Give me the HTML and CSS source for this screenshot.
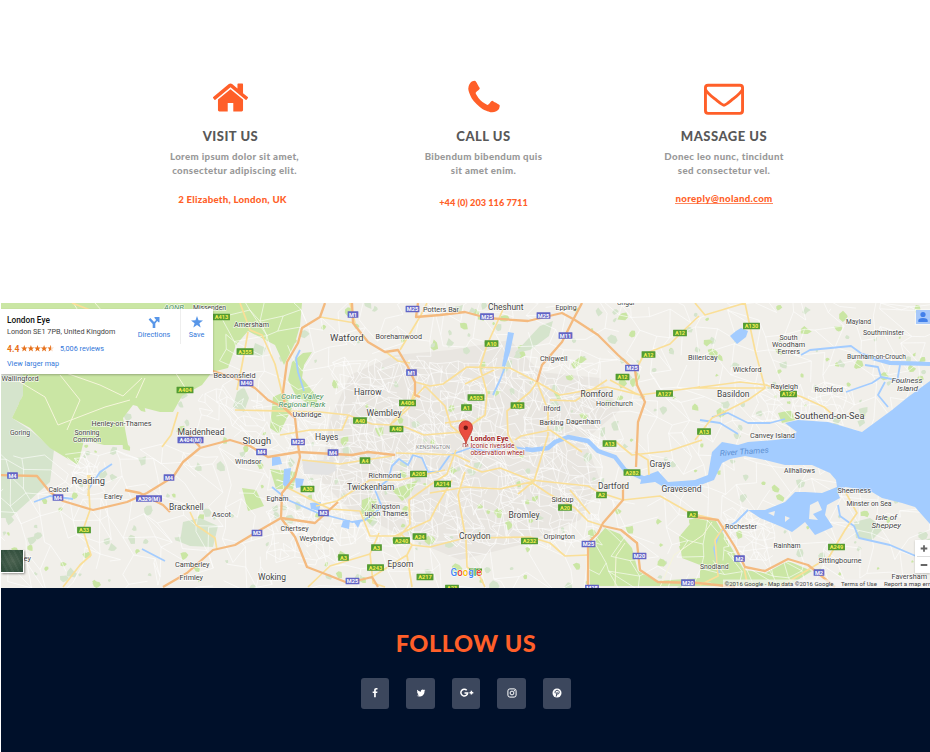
FILE: index.html
```html
<!DOCTYPE html>
<html lang="en">
<head>
<meta charset="utf-8">
<title>Contact</title>
<link rel="stylesheet" href="styles.css">
</head>
<body>
<section class="contact">
  <article class="contact-item visit">
    <svg class="icon" viewBox="0 0 1792 1792"><path d="M1472 992v480q0 26-19 45t-45 19h-384v-384h-256v384h-384q-26 0-45-19t-19-45v-480q0-1 .5-3t.5-3l575-474 575 474q1 2 1 6zm223-69l-62 74q-8 9-21 11h-3q-13 0-21-7l-692-577-692 577q-12 8-24 7-13-2-21-11l-62-74q-8-10-7-23.5t11-21.5l719-599q32-26 76-26t76 26l244 204v-195q0-14 9-23t23-9h192q14 0 23 9t9 23v408l219 182q10 8 11 21.5t-7 23.5z"/></svg>
    <h3>VISIT US</h3>
    <p>Lorem ipsum dolor sit amet,<br>consectetur adipiscing elit.</p>
    <span class="detail">2 Elizabeth, London, UK</span>
  </article>
  <article class="contact-item call">
    <svg class="icon" viewBox="0 0 1792 1792"><path d="M1600 1240q0 27-10 70.5t-21 68.5q-21 50-122 106-94 51-186 51-27 0-53-3.5t-57.5-12.5-47-14.5-55.5-20.5-49-18q-98-35-175-83-127-79-264-216t-216-264q-48-77-83-175-3-9-18-49t-20.5-55.5-14.5-47-12.5-57.5-3.5-53q0-92 51-186 56-101 106-122 25-11 68.5-21t70.5-10q14 0 21 3 18 6 53 76 11 19 30 54t35 63.5 31 53.5q3 4 17.5 25t21.5 35.5 7 28.5q0 20-28.5 50t-62 55-62 53-28.5 46q0 9 5 22.5t8.5 20.5 14 24 11.5 19q76 137 174 235t235 174q2 1 19 11.5t24 14 20.5 8.5 22.5 5q18 0 46-28.5t53-62 55-62 50-28.5q14 0 28.5 7t35.5 21.5 25 17.5q25 15 53.5 31t63.5 35 54 30q70 35 76 53 3 7 3 21z"/></svg>
    <h3>CALL US</h3>
    <p>Bibendum bibendum quis<br>sit amet enim.</p>
    <span class="detail">+44 (0) 203 116 7711</span>
  </article>
  <article class="contact-item message">
    <svg class="icon" viewBox="0 0 40 40"><g fill="none" stroke="#ff5f29" stroke-width="2.9"><rect x="1.45" y="7.2" width="37.1" height="28.2" rx="2.6"/><path d="M1.5 11.5C3 15 5 16.3 13 22.7C17 26 18.5 27.2 20 27.2S23 26 27 22.7C35 16.3 37 15 38.5 11.5"/></g></svg>
    <h3>MASSAGE US</h3>
    <p>Donec leo nunc, tincidunt<br>sed consectetur vel.</p>
    <a class="detail">noreply@noland.com</a>
  </article>
</section>

<section class="map">
  <svg class="map-canvas" viewBox="1 303 929 285" preserveAspectRatio="none">
    <rect class="land" x="0" y="300" width="930" height="290"/>
    <path class="urban" d="M350 375L395 355L450 350L510 340L540 372L600 378L620 410L585 440L600 480L580 520L520 545L460 560L400 535L350 510L320 480L330 420Z"/>
    <g id="patches"></g>
    <g class="wood">
      <path d="M0 375L23 374V395L12 418L30 430L54 450L50 482L10 518H0Z"/>
      <path d="M183 522L200 518L218 526L213 547L190 546L180 542Z"/>
      <path d="M540 326L553 321L549 336L530 350L515 353L527 340Z"/>
      <path d="M854 522L870 518L884 528L872 540L856 538Z"/>
    </g>
    <g class="park">
      <path d="M0 303H302L300 326L295 343L284 365L275 345L248 331L236 345L228 368L212 372L202 385L182 396L173 412L160 412L133 405L123 418L128 445L104 445L84 440L78 465L50 448L30 428L12 418L23 395V372L0 350Z"/>
      <path d="M303 353L312 352L304 365L302 378L318 398L315 408L296 396L288 380L292 362Z"/>
      <path d="M273 397L284 392L292 408L279 434L270 428Z"/>
      <path d="M605 528L620 534L632 548L638 571L656 581L700 578V565L682 558L679 537L695 518L716 521L731 547L744 570L766 573L788 561L812 571L788 586H590L589 547Z"/>
      <path d="M392 490L418 480L409 496L402 501Z"/><path d="M242 488L256 490L264 506L248 511Z"/>
      <path d="M571 364L581 356L587 359L574 369Z"/><path d="M778 413L791 410L795 420L782 423Z"/>
      <path d="M270 469L297 472L293 489L276 489Z"/><path d="M362 500L370 497L381 508L370 524L361 515Z"/>
    </g>
    <path class="land" d="M204 386L215 372L229 369L237 346L248 333L274 347L282 365L281 390L268 399L262 432L225 437L190 425L181 400Z"/>
    <g class="wood"><path d="M237 392L244 387L249 398L244 412L233 407Z"/><path d="M255 343L266 348L262 357L252 354Z"/></g>
    <g id="streets" class="streets"></g>
    <path class="airport" d="M302 460H333L337 470L328 475L304 474Z"/>
    <g class="water">
      <path d="M930 381L908 397L892 410L862 432L852 429L828 422L798 420L785 423L797 432L788 438L775 440L748 442L738 445L722 442L712 452L708 475L695 480L668 482L658 471L642 477L640 484L655 482L667 489L695 487L714 480L722 463L730 459L745 456L765 460L785 465L812 465L830 473L836 480L837 487L822 493L805 492L795 492L785 502L765 510L748 510L760 518L782 527L792 532L800 526L805 522L815 535L833 527L825 515L827 505L840 498L838 493L845 487L852 488L872 492L882 498L902 503L915 507L930 524Z"/>
      <path d="M730 336L736 331L741 328L748 331L746 337L737 344Z"/>
      <path d="M272 456L280 457L282 464L272 466ZM284 469L291 468L289 488L283 485ZM295 478L304 479L302 487L296 488ZM310 503L321 502L319 511L311 509ZM343 521L350 520L349 529L341 527ZM354 522L361 521L358 528Z"/>
      <path d="M508 332L514 333L510 352L505 367L502 366Z"/>
    </g>
    <path class="island" d="M810 505L818 501L822 510L813 514L818 520L809 519ZM768 513L775 511L774 516ZM785 516L790 518L785 522Z"/>
    <path class="river wide" d="M645 479L625 470L615 457L598 451L588 441L568 437L555 442L548 448L532 450L525 449"/>
    <path class="river" d="M525 449L508 446L488 452L470 448L450 455L438 472L428 472L422 458L413 455L408 465L399 459L392 466L388 480L375 490L382 507L365 520L352 522L318 513L288 500L272 487"/>
    <path class="river" d="M930 363L890 362L862 354L851 346L810 350L801 355M900 365L897 382M846 392L872 383L881 377L902 381M881 377L878 367L865 365M885 382L878 395L888 407M505 367L500 380L493 395M509 345L505 363"/>
    <path class="river bay" d="M862 355L890 363L930 364"/>
    <path class="river" d="M838 505L840 516L854 526L859 538L890 545L918 557M748 510L736 522L720 532L714 548L719 573M712 417L728 413L748 423L770 423L785 419M700 420L720 423L738 434M300 350L296 358L298 372L304 391M88 490L100 472L112 464M34 502L50 496L73 499M142 549L165 561"/>
    <path class="minor thin" d="M0 350L38 361L66 373L100 385L123 396L142 378M0 355L20 382L45 397L58 425L105 407L130 400M74 304L90 330L120 350L150 342L185 322L212 330M60 375L80 400L67 430M145 378L136 398M175 372L190 395M95 303L117 328L142 332L165 313M660 587L674 555L703 535L712 522M615 587L616 556L625 543"/>
    <path class="minor" d="M72 303L98 313M178 412L171 435L162 447M240 303L250 330L262 335L275 364L283 397L288 407M320 317L355 323L350 303M235 410L320 412L348 415L372 424L390 425L405 427L424 435L448 433L465 432M248 332L242 365L237 390M470 462L455 455L428 454L396 453M400 350L421 315L427 303M386 352L398 361L410 363M415 382L430 386L443 384L467 367L510 368L537 382L560 395L607 387L640 395L700 387M425 386L445 406L451 426L466 438M415 390L409 408L393 423M425 386L390 425M505 305L487 345L480 367L487 393L485 415L468 427M537 382L530 392L507 411L508 435L517 450M537 382L548 410L548 435L541 458L534 481L518 494M465 465L482 472L500 468L531 480L588 486L598 492L623 500L660 496L690 513L718 520M430 493L466 487L500 489L531 482L549 494L575 508L588 521L604 526M636 370L644 354L670 344L682 332L699 316M610 380L635 393L645 397M465 384L494 370M550 400L575 401L607 380M582 452L550 430L521 436L515 440M616 442L632 455L669 451L702 440M695 440L712 418L748 400L765 388L695 388M765 388L755 350L745 303L705 315L695 303M695 388L740 382L766 385L802 397L824 407L832 414M302 460L340 464L365 460L392 456M288 488L330 509L360 511L370 536L400 536L410 524L409 500L430 485L447 474L456 450M316 506L337 501L370 480L400 480L445 470M308 587L330 566L370 554L379 533M370 553L373 583L385 587M395 536L430 520L437 506L452 480M372 577L407 555L412 545L430 547L465 538L530 537L550 543L565 556L588 555M407 555L410 574L412 587M412 545L402 535M465 472L458 495L466 540L467 567L480 577L485 587M90 510L83 530L91 555L80 565L63 587M190 512L196 525L215 538L217 550M88 475L90 510M829 557L845 530L857 513L846 493M829 557L780 587M700 585L718 576L715 540L725 525M744 568L748 587M570 490L590 514M635 452L648 460L649 475M465 420L445 423M90 475L88 496M280 435L310 430L342 430L348 416"/>
    <g id="motorways"></g>
    <g id="shields"></g>
    <g id="labels"></g>
    <text class="river-name" transform="translate(720 456) rotate(-4)" textLength="49" lengthAdjust="spacingAndGlyphs">River Thames</text>
    <path class="pin" d="M466 444C465 438 459 433 459 427.500A6.700 6.700 0 0 1 472.500 427.500C472.500 433 467 438 466 444Z"/><circle cx="465.700" cy="427.800" r="2.200" fill="#651713"/>
    <path class="ferris" d="M463 447V443.500H465.500V447M466 447L467.500 444L468 447"/>
    <g class="credits"><rect x="723" y="579.500" width="207" height="8.500"/><text x="724.500" y="585.500" textLength="109" lengthAdjust="spacingAndGlyphs">©2016 Google - Map data ©2016 Google</text><text x="841" y="585.500" textLength="36" lengthAdjust="spacingAndGlyphs">Terms of Use</text><text x="884" y="585.500" textLength="46" lengthAdjust="spacingAndGlyphs">Report a map err</text></g>
    <rect x="469" y="568.500" width="13" height="6.500" class="shield-a"/>
    <text class="google" x="450.500" y="576" textLength="31" lengthAdjust="spacingAndGlyphs"><tspan fill="#4285f4">G</tspan><tspan fill="#ea4335">o</tspan><tspan fill="#fbbc05">o</tspan><tspan fill="#4285f4">g</tspan><tspan fill="#34a853">l</tspan><tspan fill="#ea4335">e</tspan></text>
  </svg>
  <aside class="place-card">
    <div class="place-info">
      <strong>London Eye</strong>
      <span class="address">London SE1 7PB, United Kingdom</span>
      <span class="rating"><b>4.4</b><svg class="stars" viewBox="0 0 33 7"><defs><path id="star" d="M3.300 0L4.200 2.400L6.600 2.500L4.700 4.100L5.400 6.500L3.300 5.100L1.200 6.500L1.900 4.100L0 2.500L2.400 2.400Z"/><clipPath id="half"><path d="M0 0H3.500V7H0Z"/></clipPath></defs><use href="#star"/><use href="#star" x="6.600"/><use href="#star" x="13.200"/><use href="#star" x="19.800"/><use href="#star" x="26.400" opacity=".3"/><g transform="translate(26.400)"><use href="#star" clip-path="url(#half)"/></g></svg><a>5,006 reviews</a></span>
      <a class="larger">View larger map</a>
    </div>
    <div class="place-action directions"><svg viewBox="0 0 12 12"><path d="M4.700 12V8L.6 3.500L2.300 2L6.100 6L7.900 4.300V3.500L6.500 2V1H11.500V6.200H10.500L9.200 5L7.300 7.500V12Z"/></svg><a>Directions</a></div>
    <div class="place-action save"><svg viewBox="0 0 12 12"><path d="M6 0L7.500 4.300L12 4.500L8.400 7.200L9.700 11.600L6 9L2.300 11.600L3.600 7.200L0 4.500L4.500 4.300Z"/></svg><a>Save</a></div>
  </aside>
  <div class="account"><svg viewBox="0 0 14 14"><circle cx="7" cy="4.500" r="2.600"/><path d="M2.300 12V10.500Q2.300 8 7 8T11.700 10.500V12Z"/></svg></div>
  <div class="zoom"><svg viewBox="0 0 15 33"><path d="M5.700 8.500H12.300M9 5.200V11.800M5.700 25H12.300" stroke="#666" stroke-width="1.800"/><path d="M2 16.500H15" stroke="#ddd"/></svg></div>
  <div class="satellite"></div>
</section>

<footer class="follow">
  <h2>FOLLOW US</h2>
  <nav class="social">
    <a><svg viewBox="0 0 1792 1792"><path d="M1343 12v264h-157q-86 0-116 36t-30 108v189h293l-39 296h-254v759h-306v-759h-255v-296h255v-218q0-186 104-288.500t277-102.500q147 0 228 12z"/></svg></a>
    <a><svg viewBox="0 0 1792 1792"><path d="M1684 408q-67 98-162 167 1 14 1 42 0 130-38 259.500t-115.500 248.500-184.500 210.500-258 146-323 54.500q-271 0-496-145 35 4 78 4 225 0 401-138-105-2-188-64.500t-114-159.500q33 5 61 5 43 0 85-11-112-23-185.500-111.500t-73.500-205.500v-4q68 38 146 41-66-44-105-115t-39-154q0-88 44-163 121 149 294.500 238.500t371.500 99.500q-8-38-8-74 0-134 94.500-228.500t228.500-94.500q140 0 236 102 109-21 205-78-37 115-142 178 93-10 186-50z"/></svg></a>
    <a><svg class="gplus" viewBox="0 0 14 10"><path d="M6.700 2.200A3.400 3.400 0 1 0 7.700 4.900H4.500M9.500 4.700H13.300M11.400 2.800V6.600" fill="none" stroke="#fff" stroke-width="1.500"/></svg></a>
    <a><svg viewBox="0 0 10 10"><g fill="none" stroke="#fff"><rect x=".9" y=".9" width="8.200" height="8.200" rx="2"/><circle cx="5" cy="5" r="1.900"/></g><circle cx="7.400" cy="2.700" r=".6"/></svg></a>
    <a><svg viewBox="0 0 10 10"><circle cx="5" cy="5" r="4.500"/><path d="M3.300 5.300C2.500 3.700 3.600 2.300 5.200 2.300C7.800 2.300 7.700 6.100 5.700 6.100C5.200 6.100 4.800 5.800 4.800 5.500M5.200 3.900L4.200 8.500" fill="none" stroke="#3c475d" stroke-width="1"/></svg></a>
  </nav>
</footer>
<script src="map.js"></script>
</body>
</html>
```

FILE: styles.css
```css
* { box-sizing: border-box; }
body { margin: 0; width: 930px; height: 752px; overflow: hidden; background: #fff; font-family: Lato, "Open Sans", sans-serif; display: flex; flex-direction: column; }
.contact { height: 303px; flex: none; padding: 78px 84px 0 111px; display: grid; grid-template-columns: 247px 251px 230px; }
.contact-item { display: flex; flex-direction: column; align-items: center; text-align: center; white-space: nowrap; }
.visit { padding-right: 4px; }
.icon { width: 40px; height: 40px; fill: #ff5f29; flex: none; }
.visit .icon { width: 39px; height: 39px; margin: 0 4px 1px 0; }
h3 { margin: 9px 0 0; color: #585858; font-size: 13px; font-weight: 900; line-height: 18px; letter-spacing: .5px; }
.visit h3 { margin-right: 4px; }
p { margin: 4px 0 0; color: #999; font-size: 9.700px; font-weight: 900; line-height: 14.400px; letter-spacing: .34px; }
.visit p { margin-left: 4px; }
.detail { margin-top: 15px; color: #ff5f29; font-size: 9.700px; font-weight: 900; line-height: 12px; letter-spacing: .23px; }
.call .detail { margin-top: 18px; font-size: 9.200px; letter-spacing: 0; line-height: 13px; }
.message .detail { margin-top: 14px; height: 12px; border-bottom: 1px solid #ff8960; letter-spacing: .32px; }

.map { position: relative; height: 285px; flex: none; margin-left: 1px; overflow: hidden; }
.map-canvas { display: block; width: 929px; height: 285px; font-family: Roboto, sans-serif; }
.land { fill: #f1efea; }
.urban { fill: #e9e6e1; }
.wood { fill: #d5e4cc; }
.park { fill: #cae6a4; }
.airport { fill: #e3e3e3; }
.water { fill: #a3ccff; }
.island { fill: #f1efea; }
.river { fill: none; stroke: #a3ccff; stroke-width: 1.800; stroke-linejoin: round; }
.river.wide { stroke-width: 4.500; }
.river.bay { stroke-width: 4; }
.streets { fill: none; stroke: #fff; stroke-width: .75; stroke-opacity: .8; }
.minor { fill: none; stroke: #fadf98; stroke-width: 1.700; stroke-linejoin: round; }
.minor.thin { stroke: #f6f6db; stroke-width: 1; }
.motorway { fill: none; stroke: #f4ba7f; stroke-width: 2.300; stroke-linejoin: round; }
.label { fill: #444; stroke: #fff; stroke-width: 1.400; stroke-opacity: .75; paint-order: stroke; }
.label.island-name { font-style: italic; }
.label.green { fill: #4b9360; font-style: italic; }
.label.poi { fill: #a02323; }
.label.area { fill: #888; }
.river-name { fill: #5d8fd0; font-size: 8px; font-style: italic; }
.shield-a { fill: #539b31; }
.shield-m { fill: #6264c5; }
.shield-text { font-size: 5.600px; font-weight: 700; text-anchor: middle; fill: #fff; }
.shield-text.a { fill: #f5ef55; }
.pin { fill: #ea4d40; stroke: #b5332a; stroke-width: .7; }
.ferris { fill: none; stroke: #a33; stroke-width: .6; }
.credits { font-size: 6.200px; fill: #444; }
.credits rect { fill: #f5f5f5; opacity: .7; }
.google { font-size: 10px; font-weight: 500; stroke: #fff; stroke-width: 1; paint-order: stroke; }

.place-card { position: absolute; left: 0; top: 6px; width: 212px; height: 65px; background: #fff; box-shadow: 0 1px 2px #0004; display: flex; font: 7.250px/10px Roboto, sans-serif; color: #444; white-space: nowrap; }
.place-info { width: 130px; padding: 6px 0 0 6px; display: flex; flex-direction: column; }
.place-info strong { color: #111; font-size: 8.300px; font-weight: 500; }
.address { margin-top: 2px; }
.place-card a { color: #3277da; }
.rating { display: flex; align-items: center; margin-top: 6px; height: 11px; }
.rating b { color: #e7711b; font-size: 8.600px; font-weight: 700; width: 14px; }
.stars { width: 33px; height: 7px; fill: #e7711b; margin-right: 6px; }
.larger { margin-top: 5px; }
.place-action { display: flex; flex-direction: column; align-items: center; padding-top: 7px; height: 35px; }
.place-action svg { width: 12px; height: 12px; fill: #5896e8; margin-bottom: 2px; }
.directions { width: 46px; }
.save { width: 32px; margin-left: 3px; border-left: 1px solid #eee; }
.account { position: absolute; left: 915px; top: 7px; width: 15px; height: 14px; background: #a8c9fa; box-shadow: 0 0 1px 1px #fff8; }
.account svg { display: block; width: 14px; height: 14px; fill: #4280ea; }
.zoom { position: absolute; left: 914px; top: 237px; width: 15px; height: 33px; background: #fff; box-shadow: 0 1px 2px #0003; }
.zoom svg { display: block; width: 15px; height: 33px; }
.satellite { position: absolute; left: 0; top: 247px; width: 23px; height: 23px; background: repeating-linear-gradient(63deg, #ffffff0c 0 2px, transparent 2px 5px), radial-gradient(#4b6250, #2c4a38); border-right: 1px solid #fff; border-bottom: 1px solid #fff; box-shadow: 1px 1px 2px #0006; }

.follow { flex: 1; margin-left: 1px; background: #00102a; display: flex; flex-direction: column; align-items: center; }
h2 { margin: 40px 0 0 1px; color: #ff5f29; font-size: 23.500px; line-height: 30px; font-weight: 900; letter-spacing: .55px; }
.social { display: flex; gap: 17px; margin: 20px 0 0 1px; }
.social a { width: 28.500px; height: 30.500px; border-radius: 3px; background: #3c475d; display: flex; align-items: center; justify-content: center; }
.social svg { width: 10px; height: 10px; fill: #fff; }
.social .gplus { width: 14px; height: 10px; margin-left: 2px; }
```

FILE: map.js
```js
const NS = "http://www.w3.org/2000/svg";
function add(parent, tag, attrs, text) {
  const el = document.createElementNS(NS, tag);
  for (const key in attrs) el.setAttribute(key, attrs[key]);
  if (text) el.textContent = text;
  document.getElementById(parent).appendChild(el);
}

// Seeded generator keeps the street network identical on every load.
let seed = 71;
function rand() {
  seed = (seed * 16807) % 2147483647;
  return seed / 2147483647;
}

// [step, x0, y0, x1, y1, chance of a link]
function streets(step, x0, y0, x1, y1, chance) {
  const rows = [];
  for (let y = y0; y <= y1; y += step) {
    const row = [];
    for (let x = x0; x <= x1; x += step) {
      row.push([x + (rand() - .5) * step, y + (rand() - .5) * step]);
    }
    rows.push(row);
  }
  let d = "";
  const f = p => p[0].toFixed(1) + " " + p[1].toFixed(1);
  rows.forEach((row, r) => row.forEach((p, c) => {
    const links = [row[c + 1], rows[r + 1] && rows[r + 1][c], rows[r + 1] && rows[r + 1][c + 1]];
    links.forEach((q, i) => {
      if (q && rand() < (i === 2 ? chance * .4 : chance)) d += "M" + f(p) + "L" + f(q);
    });
  }));
  add("streets", "path", { d });
}
streets(17, 225, 300, 940, 600, .6);
streets(17, -5, 450, 230, 600, .65);
streets(8, 335, 360, 605, 550, .72);
streets(8, 270, 415, 340, 560, .5);
streets(7, 70, 460, 110, 500, .7);
streets(7, 725, 510, 775, 560, .7);
streets(7, 755, 385, 850, 420, .6);
streets(9, 200, 390, 270, 440, .6);

for (let i = 0; i < 420; i++) {
  const x = rand() * 930, y = 303 + rand() * 285, s = 1.5 + rand() * 4;
  const pts = [];
  for (let k = 0; k < 7; k++) {
    const a = k * Math.PI / 3.5, m = s * (.5 + rand() * .7);
    pts.push((x + Math.cos(a) * m).toFixed(1) + "," + (y + Math.sin(a) * m).toFixed(1));
  }
  add("patches", "polygon", { points: pts.join(" "), class: rand() < .45 ? "park" : "wood" });
}

[
  "M325 303L320 317L302 328L298 343L287 362L283 392L285 408L295 418L298 445L300 457L295 477L282 493L281 518L295 537L307 567L328 575L348 583L372 577L378 587",
  "M418 303L416 317L440 315L465 312L487 318L528 321L562 313L575 320L598 335L618 355L635 370L637 385L645 402L638 422L636 467",
  "M623 483V500L603 523L598 533L588 543V587",
  "M603 526L621 530L637 543L640 570L658 582L698 583L735 587",
  "M352 303L353 323L368 342L385 352L398 350L408 367L415 382L415 395L420 397",
  "M582 303L573 320L562 342L542 365L537 382",
  "M210 370L235 378L255 388L268 400L283 407L295 418",
  "M0 475L37 476L50 492L63 501L93 510L127 502L147 493L173 477L183 462L200 448L230 440L250 446L268 457L298 452L352 455L368 452L395 455",
  "M125 490L140 493L163 505L170 512",
  "M163 587L187 573L213 550L235 545L255 533L281 518L315 523L338 502",
  "M695 517L718 520L735 547L745 567L765 571L788 559L808 565L835 587",
  "M185 430L200 447"
].forEach(d => add("motorways", "path", { d, class: "motorway" }));

// [name, centre x, centre y]
[
  ["A413", 221.500, 317], ["A404", 185, 390], ["A404(M)", 190.500, 440], ["A355", 245, 351.500], ["M40", 246.500, 383],
  ["M1", 353, 314.500], ["M25", 412.500, 309], ["M1", 411.500, 372.500], ["A406", 407.500, 403], ["A40", 360, 420.500],
  ["A40", 396.500, 429], ["M25", 298, 442], ["M25", 487, 316.500], ["M25", 543.500, 315.500], ["M11", 565.500, 335.500],
  ["A10", 491.500, 343.500], ["A12", 680, 333], ["A12", 648.500, 354.500], ["M25", 632, 368], ["A12", 622.500, 377],
  ["A127", 664.500, 393.500], ["A503", 476, 397.500], ["A1", 466.500, 407.500], ["A12", 517.500, 405.500],
  ["A13", 609.500, 443.500], ["A13", 704, 431.500], ["A130", 751.500, 326], ["A127", 788.500, 394],
  ["M4", 12.500, 475.500], ["M4", 58, 497.500], ["M4", 169, 477.500], ["A329(M)", 149, 498.500], ["A33", 84, 530],
  ["M4", 261.500, 452], ["M4", 333, 452.500], ["A4", 365, 460.500], ["A30", 307.500, 489], ["M3", 323.500, 513],
  ["M3", 257, 533], ["A205", 418.500, 474], ["A214", 442.500, 484], ["A3", 376.500, 547.500], ["A240", 401.500, 540.500],
  ["A24", 419.500, 536.500], ["A3", 343.500, 557.500], ["A243", 375.500, 567.500], ["A217", 425, 577], ["M25", 352.500, 581],
  ["A23", 452, 588], ["M25", 592, 588], ["A282", 632, 472.500], ["A2", 601.500, 495], ["A20", 565, 507.500], ["A2", 692.500, 514.500], ["A232", 529.500, 541],
  ["M25", 588.500, 544], ["M20", 639.500, 556], ["M20", 688, 582.500], ["M2", 739.500, 558.500], ["A249", 836.500, 547],
  ["M2", 819, 572.500]
].forEach(([name, x, y]) => {
  const motorway = name[0] === "M" || name.includes("(");
  const w = name.length > 4 ? 26 : name.length * 3.100 + 4.500;
  add("shields", "rect", { x: x - w / 2, y: y - 3.300, width: w, height: 6.600, rx: .4, class: motorway ? "shield-m" : "shield-a" });
  add("shields", "text", { x, y: y + 2, class: "shield-text" + (motorway ? "" : " a") }, name);
});

// [text, left, baseline, width, size, class]
[
  ["AONB", 164, 310, 20, 7, "green"], ["Missenden", 193, 310, 33, 7], ["Amersham", 234, 326.500, 35, 7.500], ["Wallingford", 1.500, 381, 37, 7.300],
  ["Beaconsfield", 213.500, 377.500, 42, 7.300], ["Henley-on-Thames", 91.500, 425.500, 60, 7.400], ["Goring", 10, 434.500, 20, 7.300],
  ["Sonning", 74.500, 434.500, 25, 7.300], ["Common", 73, 442, 28, 7.300], ["Maidenhead", 177.500, 435, 47, 8.800],
  ["Potters Bar", 423, 311.500, 36, 7.300], ["Watford", 330, 340.500, 33.500, 9.200], ["Borehamwood", 375.500, 339, 46.500, 7.400],
  ["Harrow", 354, 394.500, 27.500, 8.700], ["Wembley", 366.500, 415.500, 35, 8.700], ["Colne Valley", 281, 399, 42.500, 8, "green"],
  ["Regional Park", 278.500, 407, 47, 8, "green"], ["Uxbridge", 292.500, 416.500, 29, 7.400], ["Hayes", 315, 439.500, 23.500, 8.700],
  ["Slough", 242.500, 444, 28.500, 9.200], ["Cheshunt", 488, 309.500, 35.500, 8.600], ["Epping", 555.500, 309.500, 21, 7.400], ["Ongar", 617, 305, 18, 7.300],
  ["Chigwell", 540, 361, 27.500, 7.500], ["Romford", 580.500, 397, 32.500, 8.800], ["Hornchurch", 596, 406, 37, 7.400],
  ["Ilford", 543.500, 410.500, 17, 7.400], ["Barking", 539.500, 425, 24, 7.400], ["Dagenham", 566, 423.500, 34.500, 7.400],
  ["Billericay", 688, 360, 29.500, 7.300], ["Wickford", 733, 371.500, 28.500, 7.400], ["South", 779.500, 339.500, 18, 7.400],
  ["Woodham", 772, 346.800, 33, 7.400], ["Ferrers", 777.500, 354.200, 22.500, 7.400], ["Mayland", 846, 324, 25, 7.400],
  ["Southminster", 863, 335, 41, 7.300], ["Burnham-on-Crouch", 847, 359, 59, 7.300], ["Foulness", 891.500, 382.500, 31, 7.800, "island-name"],
  ["Island", 897, 391, 21, 7.800, "island-name"], ["Rayleigh", 770.500, 389, 27.500, 7.500], ["Rochford", 814.500, 392, 28.500, 7.400],
  ["Basildon", 717, 397, 32.500, 8.800], ["Southend-on-Sea", 794.500, 419, 70, 9.600], ["Canvey Island", 750, 438, 45, 7.400],
  ["Reading", 71.500, 483.500, 33.500, 9.300], ["Calcot", 48.500, 492, 20, 7.400], ["Earley", 104, 499, 18.500, 7.400],
  ["Bracknell", 169, 510, 34.500, 8.800], ["Ascot", 212, 516.500, 19, 7.400], ["Bramley", 5, 561, 26, 7.400], ["Camberley", 175, 567, 34.500, 7.400],
  ["Frimley", 179.500, 580, 23.500, 7.400], ["Windsor", 235, 463.500, 26.500, 7.400], ["Egham", 266.500, 501, 22, 7.400],
  ["Chertsey", 280.500, 530.500, 28, 7.400], ["Weybridge", 299.500, 541, 34, 7.400], ["Woking", 258, 580, 28, 8.800],
  ["Richmond", 368.500, 478, 32.500, 7.500], ["Twickenham", 347, 490, 47.500, 8.800], ["KENSINGTON", 416, 449, 34, 5.800, "area"],
  ["Kingston", 371.500, 508.800, 28.500, 7.500], ["upon Thames", 364.500, 516.200, 43.500, 7.500], ["Epsom", 387.500, 567, 26, 8.800],
  ["Croydon", 459, 538.500, 31.500, 8.800], ["Bromley", 508.500, 517.500, 31, 8.800], ["Sidcup", 551.500, 502, 22, 7.400],
  ["Orpington", 543.500, 539, 31.500, 7.400], ["Dartford", 598, 489, 31, 8.800], ["Grays", 649.500, 466.500, 21, 8.800],
  ["Gravesend", 661.500, 492, 40, 8.800], ["Allhallows", 784, 472.500, 31, 7.300], ["Sheerness", 837.500, 492.500, 33.500, 7.300],
  ["Minster on Sea", 846.500, 506, 45, 7.300], ["Isle of", 875.500, 519.500, 21.500, 8, "island-name"], ["Sheppey", 871.500, 527.500, 29.500, 8, "island-name"],
  ["Rochester", 725, 529, 32, 7.400], ["Rainham", 773.500, 547.500, 27, 7.400], ["Snodland", 700, 569, 28.500, 7.400],
  ["Sittingbourne", 818.500, 563, 43, 7.400], ["Faversham", 891.500, 579, 35.500, 7.200],
  ["London Eye", 470.500, 441, 38, 7.100, "poi bold"], ["Iconic riverside", 470.500, 448, 44, 6.500, "poi"], ["observation wheel", 470.500, 454.500, 54, 6.500, "poi"]
].forEach(([text, x, y, width, size, cls = ""]) => {
  add("labels", "text", { x, y, textLength: width, lengthAdjust: "spacingAndGlyphs", "font-size": size, "font-weight": cls.includes("bold") ? 700 : 400, class: "label " + cls }, text);
});
```
